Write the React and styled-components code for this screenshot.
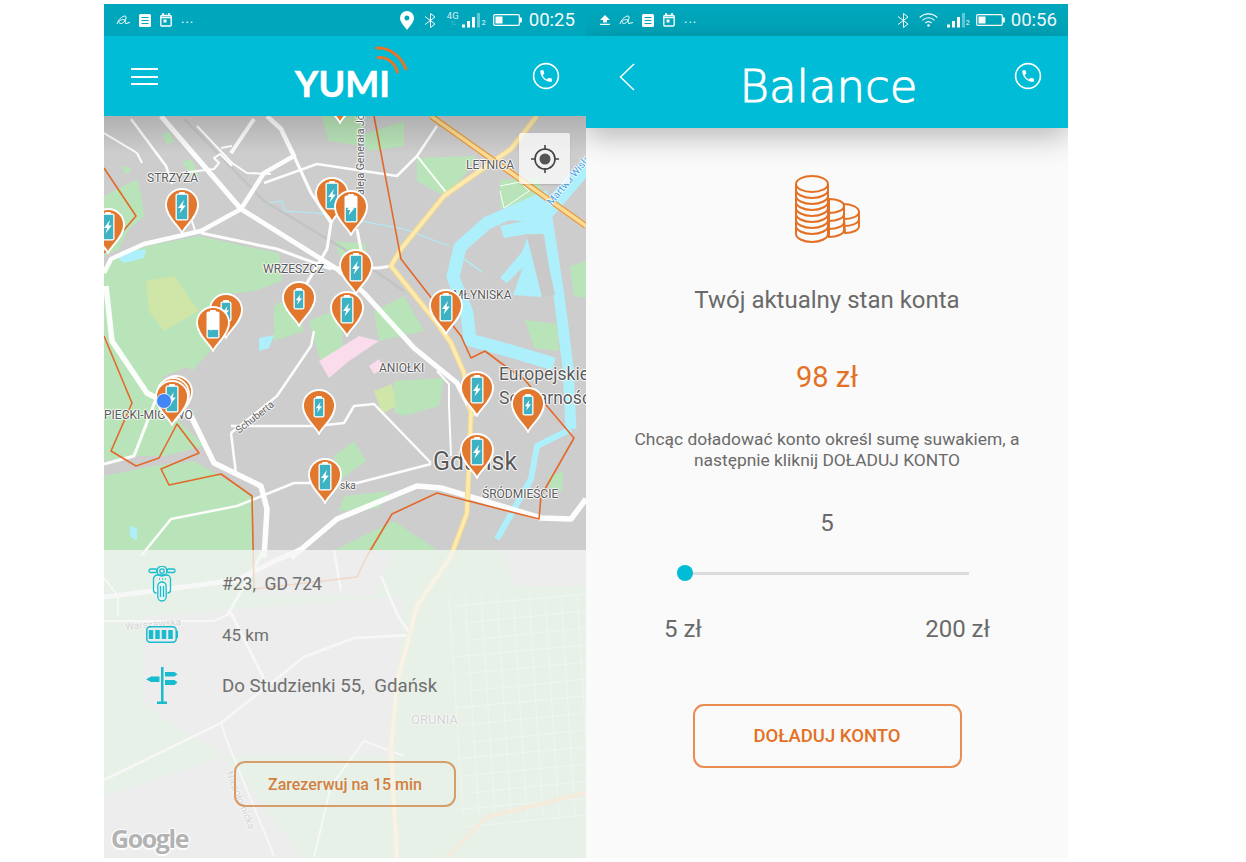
import React from "react";
import styled, { createGlobalStyle } from "styled-components";

const GlobalStyle = createGlobalStyle`
  html, body {
    margin: 0;
    background: #fff;
    font-family: Roboto, "Noto Sans", sans-serif;
  }
  * { box-sizing: border-box; }
`;

const Page = styled.div`
  display: flex;
  padding: 4px 0 0 104px;
  width: 1246px;
  height: 862px;
  overflow: hidden;
`;

const Phone = styled.div`
  position: relative;
  display: flex;
  flex-direction: column;
  width: 482px;
  height: 854px;
  overflow: hidden;
  background: #fafafa;
`;

const StatusBar = styled.div`
  display: flex;
  align-items: center;
  flex: none;
  height: 32px;
  padding: 0 11px 0 ${(p) => p.$left}px;
  background: #00a6bb;
  color: #fff;
`;

const StatusGroup = styled.div`
  display: flex;
  align-items: center;
  gap: ${(p) => p.$gap || 10}px;
  margin-left: ${(p) => (p.$right ? "auto" : "0")};
`;

const Dots = styled.span`
  font-size: 13px;
  line-height: 1;
  letter-spacing: 1px;
  margin-top: -3px;
`;

const Clock = styled.span`
  font-size: 18.6px;
  font-weight: 400;
  line-height: 1;
  margin-left: -3px;
  opacity: 0.96;
`;

const NetLabel = styled.span`
  display: flex;
  flex-direction: column;
  align-items: center;
  width: 12px;
  font-size: 9.5px;
  line-height: 9px;
  margin-right: -7px;
  margin-top: -2px;
  color: rgba(255, 255, 255, 0.85);

  & > small {
    font-size: 7px;
    line-height: 7px;
    letter-spacing: -1px;
    opacity: 0.55;
  }
`;

const SimLabel = styled.span`
  font-size: 7px;
  margin: 5px -3px 0 -9px;
`;

const Header = styled.header`
  position: relative;
  z-index: 3;
  flex: none;
  display: flex;
  justify-content: space-between;
  align-items: flex-start;
  height: ${(p) => p.$height}px;
  padding: 26px 26px 0 27px;
  background: #00bcd6;
  ${(p) => p.$shadow && "box-shadow: 0 8px 28px rgba(0, 0, 0, 0.28);"}
`;

const Burger = styled.div`
  display: flex;
  flex-direction: column;
  justify-content: space-between;
  width: 27px;
  height: 17px;
  margin-top: 6px;

  & > i {
    display: block;
    height: 2px;
    background: #fff;
  }
`;

const Logo = styled.div`
  position: relative;
  margin: 0 5px 0 0;
  font-family: Lato, "Open Sans", sans-serif;
  font-weight: 700;
  font-size: 36px;
  line-height: 42px;
  letter-spacing: 0;
  color: #fff;
  -webkit-text-stroke: 0.6px #fff;
`;

const LogoWaves = styled.svg`
  position: absolute;
  left: 79px;
  top: -16px;
`;

const BackIcon = styled.svg`
  display: block;
  margin: 1px 0 0 6px;
`;

const Title = styled.h1`
  margin: 0 0 0 8px;
  font-family: "DejaVu Sans", sans-serif;
  font-weight: 200;
  font-size: 45px;
  line-height: 50px;
  letter-spacing: 0;
  color: #fff;
  -webkit-text-stroke: 1px #fff;
`;

/* map */
const MapArea = styled.div`
  position: relative;
  flex: 1;
  overflow: hidden;
  background: #cdcdcd;
`;

const MapDrawing = styled.svg`
  position: absolute;
  inset: 0;
  display: block;
`;

const MapShade = styled.div`
  position: absolute;
  inset: 0 0 auto 0;
  height: 38px;
  background: linear-gradient(rgba(0, 0, 0, 0.14), rgba(0, 0, 0, 0));
`;

const Place = styled.span`
  position: absolute;
  left: ${(p) => p.$x - 104}px;
  top: ${(p) => p.$y - 114}px;
  transform: translateY(-50%) rotate(${(p) => p.$rot || 0}deg);
  font-size: ${(p) => p.$size || 12}px;
  line-height: 1.1;
  white-space: pre;
  color: ${(p) => p.$color || "#5a5a5a"};
  text-shadow: -1px 0 1px #fff, 1px 0 1px #fff, 0 -1px 1px #fff, 0 1px 1px #fff;
`;

const PinMark = styled.svg`
  position: absolute;
  left: ${(p) => p.$x - 104 - 17}px;
  top: ${(p) => p.$tip - 116 - 45}px;
`;

const BlueDot = styled.div`
  position: absolute;
  left: ${164 - 104 - 8}px;
  top: ${401 - 116 - 8}px;
  width: 16px;
  height: 16px;
  border-radius: 50%;
  background: #4285f4;
  border: 1px solid #e8eefc;
`;

const LocateButton = styled.button`
  position: absolute;
  right: 16px;
  top: 17px;
  display: flex;
  align-items: center;
  justify-content: center;
  width: 51px;
  height: 51px;
  padding: 0;
  border: 0;
  border-radius: 2px;
  background: rgba(255, 255, 255, 0.72);
  box-shadow: 0 1px 2px rgba(0, 0, 0, 0.14);
`;

const DetailPanel = styled.div`
  position: absolute;
  left: 0;
  right: 0;
  bottom: 0;
  height: 308px;
  padding-top: 8px;
  background: rgba(245, 245, 245, 0.78);
`;

const InfoRow = styled.div`
  display: flex;
  align-items: center;
  height: 51px;
  padding-left: 40px;
`;

const InfoIcon = styled.div`
  display: flex;
  justify-content: center;
  flex: none;
  width: 36px;
  margin-right: 42px;
`;

const InfoText = styled.span`
  font-size: ${(p) => p.$size}px;
  white-space: pre;
  color: #707070;
`;

const OutlineButton = styled.button`
  display: block;
  margin: ${(p) => p.$top}px auto 0;
  width: ${(p) => p.$w}px;
  height: ${(p) => p.$h}px;
  border: 2px solid ${(p) => p.$edge};
  border-radius: 11px;
  background: transparent;
  color: ${(p) => p.$color};
  font-family: Roboto, sans-serif;
  font-size: ${(p) => p.$size}px;
  font-weight: 500;
`;

const GoogleMark = styled.span`
  position: absolute;
  left: 7px;
  bottom: 3px;
  font-family: "Open Sans", sans-serif;
  font-weight: 700;
  font-size: 25px;
  letter-spacing: -1.4px;
  color: #b3b3b3;
  text-shadow: -1.5px 0 1px #fff, 1.5px 0 1px #fff, 0 -1.5px 1px #fff, 0 1.5px 1px #fff;
`;

/* balance screen */
const Content = styled.main`
  flex: 1;
  display: flex;
  flex-direction: column;
  align-items: center;
  padding-top: 47px;
  color: #6a6a6a;
`;

const Coins = styled.svg`
  display: block;
  margin-left: 2px;
`;

const Lead = styled.p`
  margin: 42px 0 0;
  font-size: 24px;
  line-height: 30px;
`;

const Amount = styled.div`
  margin-top: 45px;
  font-size: 29px;
  line-height: 34px;
  color: #e37125;
`;

const Hint = styled.p`
  margin: 35px 0 0;
  font-size: 17.4px;
  line-height: 21px;
  text-align: center;
`;

const SliderValue = styled.div`
  margin-top: 39px;
  font-size: 24px;
  line-height: 26px;
`;

const Track = styled.div`
  position: relative;
  margin-top: 36px;
  width: 284px;
  height: 3px;
  background: #dcdcdc;
`;

const Thumb = styled.div`
  position: absolute;
  left: -8px;
  top: -7px;
  width: 16px;
  height: 16px;
  border-radius: 50%;
  background: #00bcd6;
`;

const Range = styled.div`
  display: flex;
  justify-content: space-between;
  width: 326px;
  margin-top: 41px;
  font-size: 24px;
  line-height: 26px;
`;

const PhoneRound = () => (
  <svg width="28" height="28" viewBox="0 0 28 28">
    <circle cx="14" cy="14" r="12.4" fill="none" stroke="#fff" strokeWidth="1.6" />
    <path
      transform="translate(6.4 6.4) scale(0.64)"
      fill="#fff"
      d="M6.62 10.79c1.44 2.83 3.76 5.14 6.59 6.59l2.2-2.2c.27-.27.67-.36 1.02-.24 1.12.37 2.33.57 3.57.57.55 0 1 .45 1 1V20c0 .55-.45 1-1 1-9.39 0-17-7.61-17-17 0-.55.45-1 1-1h3.5c.55 0 1 .45 1 1 0 1.25.2 2.45.57 3.57.11.35.03.74-.25 1.02l-2.2 2.2z"
    />
  </svg>
);

const Squiggle = () => (
  <svg width="14" height="10" viewBox="0 0 14 10" fill="none" stroke="#fff" strokeWidth="1">
    <path d="M1 9C2 5 6 1 9 1 11 1 10 5 8 7 6 9 3 9 3 7 3 5 7 4 9 5 9.500 7 9 9 10 8.500L14 7.500" />
  </svg>
);

const DocIcon = () => (
  <svg width="12" height="13" viewBox="0 0 12 13">
    <rect width="12" height="13" rx="1.500" fill="#fff" />
    <path d="M2.500 3.500h7M2.500 6.500h7M2.500 9.500h7" stroke="#00a6bb" strokeWidth="1.200" />
  </svg>
);

const CalendarIcon = () => (
  <svg width="12" height="14" viewBox="0 0 12 14" fill="none" stroke="#fff">
    <rect x="0.800" y="2.500" width="10.400" height="10.500" rx="1" strokeWidth="1.400" />
    <path d="M1 4.500h10M3 0v3M9 0v3" strokeWidth="1.600" />
    <rect x="3.500" y="6.500" width="3" height="3" fill="#fff" stroke="none" />
  </svg>
);

const UploadIcon = () => (
  <svg width="10" height="10" viewBox="0 0 10 10" fill="#fff">
    <path d="M5 0l5 5H7v2.500H3V5H0zM0 8.700h10V10H0z" />
  </svg>
);

const LocationIcon = () => (
  <svg width="14" height="19" viewBox="0 0 14 19">
    <path
      fill="#fff"
      fillRule="evenodd"
      d="M7 0a7 7 0 0 1 7 7c0 4.500-5 9-7 12C5 16 0 11.500 0 7a7 7 0 0 1 7-7zm0 4.500a2.500 2.500 0 1 0 0 5 2.500 2.500 0 0 0 0-5z"
    />
  </svg>
);

const BluetoothIcon = () => (
  <svg width="13" height="15" viewBox="0 0 13 15" fill="none" stroke="#fff" strokeWidth="1">
    <path d="M1 3.500l10 7.500-4.500 3.500V.500L11 4 1 11.500" />
  </svg>
);

const WifiIcon = () => (
  <svg width="19" height="14" viewBox="0 0 19 14" fill="none" stroke="#fff" strokeWidth="1.100">
    <path d="M.700 4.500a12.500 12.500 0 0 1 17.600 0M3.500 7.300a8.500 8.500 0 0 1 12 0M6.300 10a4.500 4.500 0 0 1 6.400 0" />
    <circle cx="9.500" cy="12.500" r="1.300" fill="#fff" stroke="none" />
  </svg>
);

const SignalIcon = () => (
  <svg width="19" height="15" viewBox="0 0 19 15" fill="#fff">
    <rect x="0" y="11.500" width="3" height="3" />
    <rect x="5" y="8" width="3" height="6.500" />
    <rect x="10" y="4" width="3" height="10.500" />
    <rect x="15" y="0" width="3" height="14.500" opacity="0.4" />
  </svg>
);

const BatteryIcon = () => (
  <svg width="29" height="12" viewBox="0 0 29 12" fill="none">
    <rect x="0.700" y="0.700" width="25.600" height="10.600" rx="1" stroke="#fff" strokeWidth="1.200" />
    <rect x="2.500" y="2.500" width="7" height="7" fill="#fff" />
    <rect x="27" y="3.500" width="1.800" height="5" fill="#fff" />
  </svg>
);

const CrosshairIcon = () => (
  <svg width="30" height="30" viewBox="0 0 30 30" fill="none" stroke="#444">
    <circle cx="15" cy="15" r="10" strokeWidth="1.600" />
    <circle cx="15" cy="15" r="5.500" fill="#555" stroke="none" />
    <path d="M15 1v5M15 24v5M1 15h5M24 15h5" strokeWidth="1.600" />
  </svg>
);

const ScooterIcon = () => (
  <svg width="28" height="36" viewBox="0 0 28 36" fill="none" stroke="#19bccf" strokeWidth="1.300">
    <rect x="1" y="3" width="8" height="3.500" rx="1.700" />
    <rect x="19" y="3" width="8" height="3.500" rx="1.700" />
    <circle cx="14" cy="5" r="5" />
    <circle cx="14" cy="5" r="2.200" />
    <path d="M5.500 24V13a4 4 0 0 1 4-4h9a4 4 0 0 1 4 4v11a3 3 0 0 1-3 3M5.500 24a3 3 0 0 0 3 3" />
    <rect x="9.800" y="16" width="8.400" height="19" rx="4.200" fill="#e6f4f5" />
    <path d="M12.500 20v11M15.500 20v11" />
    <path d="M11 13h1M14 13h1M17 13h1" />
  </svg>
);

const BatteryFullIcon = () => (
  <svg width="33" height="17" viewBox="0 0 33 17" fill="none">
    <rect x="0.800" y="0.800" width="29.400" height="15.400" rx="3.500" stroke="#19bccf" strokeWidth="1.500" />
    <path d="M31 5v7" stroke="#19bccf" strokeWidth="2" />
    <path d="M5 4v9M11.500 4v9M18 4v9M24.500 4v9" stroke="#19bccf" strokeWidth="4.500" />
  </svg>
);

const SignpostIcon = () => (
  <svg width="32" height="37" viewBox="0 0 32 37" fill="#19bccf">
    <rect x="15" y="0" width="2.500" height="35" />
    <rect x="11" y="34.500" width="10" height="2.500" />
    <path d="M13.500 9.500v5.500H5L0 12.200 5 9.500zM19 5h9.500l3 2.300-3 2.200H19zM19 13h9.500l3 2.500-3 2.500H19z" />
  </svg>
);

const roads = [
  ["M57 0L137 93L233 153L260 177L310 232L353 267L370 300", 5],
  ["M0 157L7 143L40 128L97 115L137 93L160 57L190 40L177 13L163 0", 4.500],
  ["M190 40L207 77L227 107L223 133L203 167L190 190", 3],
  ["M160 67L213 48L293 60L313 40L333 10", 2.500],
  ["M0 17L33 37L38 47", 2],
  ["M27 3L62 50L68 68", 2.500],
  ["M93 10L128 47L143 57L167 58", 2],
  ["M127 37L150 3", 4],
  ["M117 32L128 30", 2],
  ["M77 57L110 53L115 47L110 42L116 38L128 50", 2],
  ["M88 105L92 118", 2],
  ["M97 117L173 133L227 153", 3],
  ["M2 170L8 225L43 277L87 300L110 347L157 370L163 393L160 442", 5.500],
  ["M0 348L30 340L57 270", 3],
  ["M127 317L173 280L207 230L210 215", 2.500],
  ["M127 317L132 358", 2.500],
  ["M127 310L213 310L240 307L250 290L270 288L327 347", 2.500],
  ["M37 440L67 403L133 390L190 367L253 367L327 348", 2.500],
  ["M187 442L233 403L313 370L337 372L437 402L467 403L482 383", 5.500],
  ["M253 113L260 150", 3],
  ["M227 152L275 152L287 150", 3],
  ["M313 40L345 80", 2],
  ["M396 75L400 92L425 75L416 66L396 70", 1],
  ["M333 255L345 268L345 290L347 340", 2],
  ["M0 481L33 477L133 464L173 444L200 432", 5],
  ["M123 500L160 434", 3],
  ["M127 497L167 577", 3],
  ["M0 664L117 607L200 541L250 522L307 519L294 500L277 460", 2.500],
  ["M230 434L237 475", 2.500],
  ["M0 505L110 505L127 497", 2],
  ["M210 741L227 670L260 625L300 640", 2],
  ["M117 607L123 625L170 740", 2],
  ["M0 462L14 480L14 500", 2],
];

const water = [
  "M396 110L444 100L446 118L423 118L400 122Z",
  "M429 86L446 94L443 107L403 104L383 107Z",
  "M396 162L418 136L424 120L438 181L409 179L419 151L403 167Z",
  "M482 40L482 62L445 105L435 92Z",
  "M15 137L42 133L40 142L20 147L15 143Z",
  "M155 222L170 219L165 232L155 235Z",
  "M26 410L33 412L33 425L26 420Z",
];

const rivers = [
  ["M445 80L383 107L356 131L349 161L363 197L366 224L403 234L450 248", 13],
  ["M440 85L446 121L455 180L459 211L464 252L467 313", 11],
  ["M467 313L433 330L427 363L393 423", 6],
  ["M356 140L378 156", 1.500],
  ["M165 87L178 85L180 95L213 97L300 113L345 130", 1],
  ["M42 128L90 118", 1.500],
];

const greens = [
  "M0 150L18 135L95 120L150 132L175 137L178 165L150 175L125 178L100 210L112 225L95 225L85 250L60 260L55 275L70 300L100 330L60 340L30 340L0 345Z",
  "M0 80L33 63L37 77L40 100L25 113L15 133L0 140Z",
  "M18 50L27 52L25 58L20 57Z",
  "M58 18L66 16L70 26L63 28Z",
  "M78 45L88 44L95 60L88 62Z",
  "M217 0L258 0L258 30L225 25Z",
  "M313 42L372 40L360 60L340 80L313 65Z",
  "M0 360L50 350L90 345L150 380L148 442L60 442L0 442Z",
  "M205 205L240 190L238 240L218 250Z",
  "M290 265L340 262L335 290L300 300L290 296Z",
  "M215 442L290 405L345 442Z",
  "M255 20L300 5L300 30L265 35Z",
  "M396 64L435 62L440 87L396 92Z",
  "M466 150L482 145L482 182L470 180Z",
  "M421 204L453 208L455 235L430 232Z",
  "M230 125L262 128L262 165L240 150Z",
  "M270 195L300 180L320 215L275 225Z",
  "M230 340L250 325L262 345L235 365Z",
  "M170 190L190 180L200 215L170 225Z",
  "M240 380L285 375L275 392L235 395Z",
  "M445 360L460 355L458 375L445 372Z",
  "M0 220L10 220L25 290L5 340L0 335Z",
  "M65 230L100 210L120 220L88 255Z",
  "M0 434H482V742H0Z",
];

const grayBlobs = [
  "M40 500L300 480L285 640L120 640L40 590Z",
  "M0 680L120 640L200 742L0 742Z",
  "M160 434L290 434L270 480L150 480Z",
  "M400 434L482 434L482 470L410 470Z",
];

// thin street grid of the south-east quarter
const streets = Array.from({ length: 14 }, (_, i) => {
  const y = 490 + i * 17;
  return `M${350 + (i % 3) * 8} ${y}L482 ${y - 12}`;
}).concat(
  Array.from({ length: 9 }, (_, i) => {
    const x = 345 + i * 16;
    return `M${x} 480L${x + 14} 700`;
  })
);

const pins = [
  { x: 340, tip: 123 },
  { x: 108, tip: 253 },
  { x: 182, tip: 233 },
  { x: 332, tip: 222 },
  { x: 351, tip: 235, level: 0.55 },
  { x: 356, tip: 294 },
  { x: 299, tip: 326, small: true },
  { x: 347, tip: 336 },
  { x: 446, tip: 334 },
  { x: 226, tip: 338, small: true },
  { x: 213, tip: 351, level: 0.3 },
  { x: 176, tip: 420 },
  { x: 173, tip: 422 },
  { x: 172, tip: 425 },
  { x: 319, tip: 434, small: true },
  { x: 325, tip: 503 },
  { x: 477, tip: 416 },
  { x: 528, tip: 432, small: true },
  { x: 477, tip: 478 },
];

const Pin = ({ x, tip, level = 1, small }) => {
  const h = small ? 20 : 27;
  const w = small ? 11 : 13;
  const bx = 17 - w / 2;
  const by = small ? 8.500 : 5.500;
  const fill = (h - 2.600) * level;
  return (
    <PinMark $x={x} $tip={tip} width="34" height="46" viewBox="0 0 34 46">
      <path
        d="M17 45C15 39 1 29 1 17A16 16 0 1 1 33 17C33 29 19 39 17 45Z"
        fill="#e1782d"
        stroke="#fff"
        strokeWidth="1.800"
      />
      <rect x={17 - 3} y={by - 1.500} width="6" height="3" rx="1" fill="#fff" />
      <rect x={bx} y={by} width={w} height={h} rx="2" fill="#fff" />
      <rect x={bx + 1.300} y={by + h - 1.300 - fill} width={w - 2.600} height={fill} fill="#3db2c2" />
      <path
        transform={`translate(17 ${by + h / 2}) scale(${small ? 0.8 : 1})`}
        d="M2 -7L-4 1H-.8L-2.500 6.500L3.800 -1.500H.5Z"
        fill="#fff"
      />
    </PinMark>
  );
};

const MapLines = () => (
  <MapDrawing width="482" height="742" viewBox="0 0 482 742" fill="none" strokeLinejoin="round">
    {greens.map((d) => (
      <path key={d} d={d} fill="#b9e4b9" />
    ))}
    {grayBlobs.map((d) => (
      <path key={d} d={d} fill="#cdd3cd" />
    ))}
    <path d="M42 165L70 160L95 195L60 215L45 195Z" fill="#cfe6a8" />
    <path d="M270 275L288 268L292 290L278 298Z" fill="#cfe6a8" />
    <path d="M215 245L255 220L275 225L245 245L225 262Z" fill="#fbdcec" />
    <path d="M265 250L275 243L280 252L270 258Z" fill="#fbdcec" />
    <path d="M80 3L160 85L240 133L300 175" stroke="#c3c3c3" strokeWidth="2.500" />
    {water.map((d) => (
      <path key={d} d={d} fill="#aeeffc" />
    ))}
    {rivers.map(([d, w]) => (
      <path key={d} d={d} stroke="#aeeffc" strokeWidth={w} />
    ))}
    <path d="M423 121L438 118L451 179L438 181Z" fill="#c9c9c9" />
    {streets.map((d) => (
      <path key={d} d={d} stroke="#fff" strokeWidth="1" strokeOpacity="0.5" />
    ))}
    {roads.map(([d, w]) => (
      <path key={d} d={d} stroke="#fff" strokeWidth={w} strokeOpacity="0.95" />
    ))}
    <path
      d="M433 0L407 33L340 80L297 133L287 150L333 207L347 227L360 257L367 297L363 397L347 440L313 490L293 567L287 634L293 742"
      stroke="#f3d98e"
      strokeWidth="5.500"
    />
    <path
      d="M433 0L407 33L340 80L297 133L287 150L333 207L347 227L360 257L367 297L363 397L347 440L313 490L293 567L287 634L293 742"
      stroke="#fdeab0"
      strokeWidth="3.500"
    />
    <path d="M327 0L482 110" stroke="#e89a3c" strokeWidth="6" />
    <path d="M327 0L482 110" stroke="#fbdc95" strokeWidth="3.500" />
    <path d="M343 741L383 701L482 677" stroke="#f2c78a" strokeWidth="4" />
    <path
      d="M270 0L297 143L357 220L367 242L381 235L397 247L420 263L470 322L437 380L435 403L333 377L288 398L263 440L253 461L150 473L148 380L117 358L65 369L57 353L95 337L73 308L55 342L32 350L7 335L28 287L0 220"
      stroke="#e2692a"
      strokeWidth="1.600"
    />
    <path d="M0 52L32 100L0 137" stroke="#e2692a" strokeWidth="1.600" />
  </MapDrawing>
);

const MapScreen = () => (
  <Phone>
    <StatusBar $left={12}>
      <StatusGroup $gap={9}>
        <Squiggle />
        <DocIcon />
        <CalendarIcon />
        <Dots>...</Dots>
      </StatusGroup>
      <StatusGroup $right $gap={10}>
        <LocationIcon />
        <BluetoothIcon />
        <NetLabel>
          4G
          <small>↑↓</small>
        </NetLabel>
        <SignalIcon />
        <SimLabel>2</SimLabel>
        <BatteryIcon />
        <Clock>00:25</Clock>
      </StatusGroup>
    </StatusBar>
    <Header $height={80}>
      <Burger>
        <i />
        <i />
        <i />
      </Burger>
      <Logo>
        YUMI
        <LogoWaves width="36" height="30" viewBox="0 0 36 30" fill="none" stroke="#e2762f" strokeLinecap="round">
          <path d="M2.500 2C14 1.500 26 8 32 23" strokeWidth="3" />
          <path d="M4 11.500C12 11 20 15 23.500 26" strokeWidth="3" />
        </LogoWaves>
      </Logo>
      <PhoneRound />
    </Header>
    <MapArea>
      <MapLines />
      <MapShade />
      <Place $x={147} $y={177}>STRZYŻA</Place>
      <Place $x={466} $y={164}>LETNICA</Place>
      <Place $x={263} $y={268}>WRZESZCZ</Place>
      <Place $x={453} $y={294}>MŁYNISKA</Place>
      <Place $x={379} $y={367}>ANIOŁKI</Place>
      <Place $x={104} $y={414}>PIECKI-MIGOWO</Place>
      <Place $x={499} $y={373} $size={17.500}>Europejskie</Place>
      <Place $x={499} $y={397} $size={17.500}>Solidarności</Place>
      <Place $x={433} $y={460} $size={25}>Gdańsk</Place>
      <Place $x={482} $y={493}>ŚRÓDMIEŚCIE</Place>
      <Place $x={232} $y={415} $size={10} $rot={-38}>Schuberta</Place>
      <Place $x={340} $y={483} $size={10}>ska</Place>
      <Place $x={318} $y={150} $size={10.500} $rot={-90}>aleja Generała Józ</Place>
      <Place $x={538} $y={178} $size={10} $rot={-50} $color="#3f9fe0">Martwa Wisła</Place>
      <Place $x={125} $y={622} $size={10} $rot={-5}>Warszawska</Place>
      <Place $x={411} $y={718} $size={13}>ORUNIA</Place>
      <Place $x={210} $y={798} $size={10} $rot={68}>Niepołomicka</Place>
      {pins.map((pin, i) => (
        <Pin key={i} {...pin} />
      ))}
      <BlueDot />
      <LocateButton aria-label="locate">
        <CrosshairIcon />
      </LocateButton>
      <DetailPanel>
        <InfoRow>
          <InfoIcon>
            <ScooterIcon />
          </InfoIcon>
          <InfoText $size={17.5}>#23,  GD 724</InfoText>
        </InfoRow>
        <InfoRow>
          <InfoIcon>
            <BatteryFullIcon />
          </InfoIcon>
          <InfoText $size={17}>45 km</InfoText>
        </InfoRow>
        <InfoRow>
          <InfoIcon>
            <SignpostIcon />
          </InfoIcon>
          <InfoText $size={18.7}>Do Studzienki 55,  Gdańsk</InfoText>
        </InfoRow>
        <OutlineButton $top={50} $w={222} $h={46} $size={16} $color="#d2803f" $edge="rgba(210, 128, 63, 0.75)">
          Zarezerwuj na 15 min
        </OutlineButton>
        <GoogleMark>Google</GoogleMark>
      </DetailPanel>
    </MapArea>
  </Phone>
);

const BalanceScreen = () => (
  <Phone>
    <StatusBar $left={14}>
      <StatusGroup $gap={9}>
        <UploadIcon />
        <Squiggle />
        <DocIcon />
        <CalendarIcon />
        <Dots>...</Dots>
      </StatusGroup>
      <StatusGroup $right $gap={9}>
        <BluetoothIcon />
        <WifiIcon />
        <SignalIcon />
        <SimLabel>2</SimLabel>
        <BatteryIcon />
        <Clock>00:56</Clock>
      </StatusGroup>
    </StatusBar>
    <Header $height={92} $shadow>
      <BackIcon width="16" height="28" viewBox="0 0 16 28" fill="none" stroke="#fff" strokeWidth="1.500">
        <path d="M15 1L1.500 14 15 27" />
      </BackIcon>
      <Title>Balance</Title>
      <PhoneRound />
    </Header>
    <Content>
      <Coins width="66" height="68" viewBox="0 0 66 68" fill="#fafafa" stroke="#e37125" strokeWidth="2">
        <path d="M48 29c8 0 16 3 16 8v14c0 4-6 7-14 7z" />
        <path d="M49 44c6 0 15-2 15-7M49 51c6 0 15-2 15-7" fill="none" />
        <path d="M34 24c9 0 15 3 15 7v24c0 4-7 7-15 7z" />
        <path d="M34 38c8 0 15-3 15-7M34 46c8 0 15-3 15-7M34 54c8 0 15-3 15-7" fill="none" />
        <path d="M1 9v50c0 4 7 8 16 8s16-4 16-8V9" />
        <ellipse cx="17" cy="9" rx="16" ry="8" />
        <path d="M1 15c0 4 7 8 16 8s16-4 16-8M1 21c0 4 7 8 16 8s16-4 16-8M1 27c0 4 7 8 16 8s16-4 16-8M1 33c0 4 7 8 16 8s16-4 16-8M1 39c0 4 7 8 16 8s16-4 16-8M1 45c0 4 7 8 16 8s16-4 16-8M1 51c0 4 7 8 16 8s16-4 16-8" fill="none" />
      </Coins>
      <Lead>Twój aktualny stan konta</Lead>
      <Amount>98 zł</Amount>
      <Hint>
        Chcąc doładować konto określ sumę suwakiem, a
        <br />
        następnie kliknij DOŁADUJ KONTO
      </Hint>
      <SliderValue>5</SliderValue>
      <Track>
        <Thumb />
      </Track>
      <Range>
        <span>5 zł</span>
        <span>200 zł</span>
      </Range>
      <OutlineButton $top={62} $w={269} $h={64} $size={18.5} $color="#e37125" $edge="rgba(227, 113, 37, 0.8)">
        DOŁADUJ KONTO
      </OutlineButton>
    </Content>
  </Phone>
);

export default function App() {
  return (
    <Page>
      <GlobalStyle />
      <MapScreen />
      <BalanceScreen />
    </Page>
  );
}
